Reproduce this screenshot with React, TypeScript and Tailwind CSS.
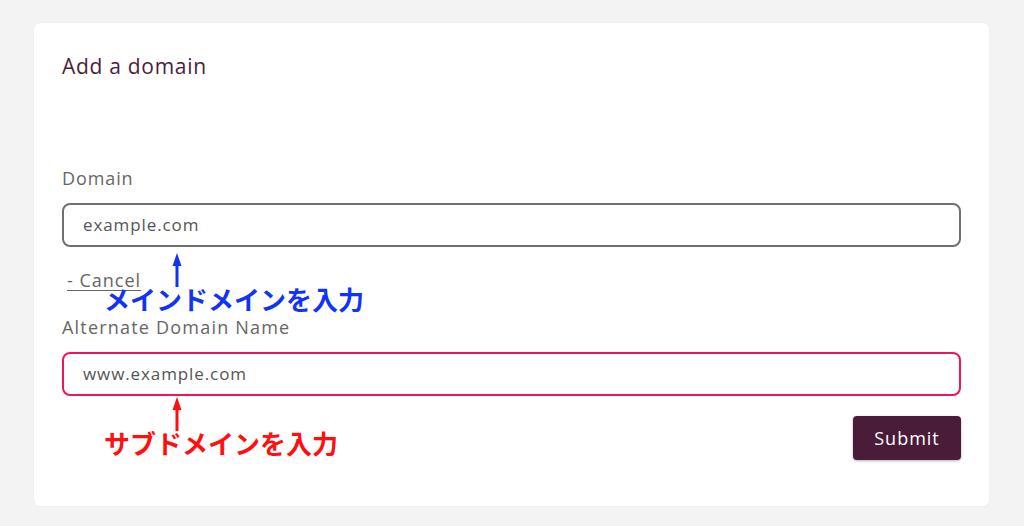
import React from "react";

const font = { fontFamily: '"Open Sans", "Noto Sans", sans-serif' };
const jp = { fontFamily: '"Noto Sans CJK JP", sans-serif' };

function Arrow({ color }: { color: string }) {
  return (
    <svg width="12" height="34" viewBox="0 0 12 34" className="block">
      <polygon points="6,0 10.5,13 1.5,13" fill={color} />
      <rect x="4.5" y="12" width="3" height="22" fill={color} />
    </svg>
  );
}

function Note({ color, text, className }: { color: string; text: string; className: string }) {
  return (
    <div className={`absolute left-[42px] flex flex-col items-start z-10 ${className}`}>
      <div className="ml-[67px]">
        <Arrow color={color} />
      </div>
      <div
        className="text-[26px] leading-[24px] font-bold whitespace-nowrap"
        style={{ ...jp, color }}
      >
        {text}
      </div>
    </div>
  );
}

export default function App() {
  return (
    <div className="min-h-[526px] w-[1024px] bg-[#f3f3f3] pt-[23px] pl-[34px]" style={font}>
      <div className="w-[955px] h-[483px] rounded-[6px] bg-white shadow-[0_0_2px_rgba(0,0,0,0.06)] px-[28px] pt-[30px] flex flex-col">
        <h2 className="text-[21px] leading-[26px] text-[#4a1d3d] tracking-[0.7px]">Add a domain</h2>

        <label className="mt-[88px] text-[18px] leading-[22px] text-[#666] tracking-[0.9px]">Domain</label>
        <div className="relative mt-[14px]">
          <div className="h-[44px] rounded-[8px] border-2 border-[#707070] flex items-center pl-[19px] text-[17px] text-[#555] tracking-[0.9px]">
            example.com
          </div>
          <Note color="#1133f5" text="メインドメインを入力" className="top-[50px]" />
        </div>

        <div className="mt-[22px] pl-[5px] text-[18px] leading-[22px] text-[#666] tracking-[1px] underline underline-offset-[3px]">
          - Cancel
        </div>

        <label className="mt-[25px] text-[18px] leading-[22px] text-[#666] tracking-[1.2px]">Alternate Domain Name</label>
        <div className="relative mt-[14px]">
          <div className="h-[44px] rounded-[8px] border-2 border-[#f0145a] flex items-center pl-[19px] text-[17px] text-[#555] tracking-[0.9px]">
            www.example.com
          </div>
          <Note color="#ff0f0f" text="サブドメインを入力" className="top-[45px]" />
        </div>

        <div className="mt-[20px] flex justify-end">
          <button className="w-[108px] h-[44px] rounded-[4px] bg-[#4a1c3a] text-white text-[18px] tracking-[1px] shadow-[0_1px_3px_rgba(0,0,0,0.3)]">
            Submit
          </button>
        </div>
      </div>
    </div>
  );
}
